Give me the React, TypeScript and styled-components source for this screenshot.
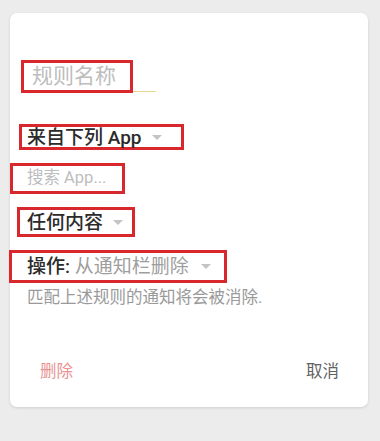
import React from 'react';
import styled, { createGlobalStyle } from 'styled-components';

const GlobalStyle = createGlobalStyle`
  html, body {
    margin: 0;
    padding: 0;
    background: #ececec;
  }
  body {
    font-family: Roboto, 'Noto Sans CJK SC', sans-serif;
  }
`;

const Page = styled.div`
  padding: 13px 12px 34px 10px;
  min-height: 441px;
  box-sizing: border-box;
`;

const Card = styled.div`
  width: 358px;
  height: 394px;
  box-sizing: border-box;
  background: #ffffff;
  border-radius: 7px;
  box-shadow: 0 1px 3px rgba(0, 0, 0, 0.12);
  padding: 47px 29px 25px 17px;
  display: flex;
  flex-direction: column;
`;

// red annotation box drawn round a field; $shift moves the whole box (and its text) right
const Marked = styled.div<{ $w: number; $h: number; $pad: number; $top?: number; $shift?: number }>`
  width: ${(p) => p.$w}px;
  height: ${(p) => p.$h}px;
  margin-left: ${(p) => -(p.$pad + 3) + (p.$shift || 0)}px;
  margin-top: ${(p) => p.$top || 0}px;
  padding-left: ${(p) => p.$pad}px;
  box-sizing: border-box;
  border: 3px solid #d8282d;
  display: flex;
  align-items: center;
  flex-shrink: 0;
`;

const NameRow = styled.div`
  display: flex;
  align-items: flex-end;
`;

const Underline = styled.span`
  width: 23px;
  height: 1px;
  margin-bottom: 1px;
  background: #e6d58c;
`;

const Placeholder = styled.span<{ $size: number }>`
  font-size: ${(p) => p.$size}px;
  color: #bdbdbd;
  line-height: 1;
  white-space: nowrap;
`;

const Label = styled.span<{ $size: number }>`
  font-size: ${(p) => p.$size}px;
  font-weight: 500;
  color: #2b2b2b;
  line-height: 1;
  white-space: nowrap;
`;

const Muted = styled.span`
  font-weight: 400;
  color: #9e9e9e;
`;

const Caret = styled.span<{ $gap: number }>`
  margin-left: ${(p) => p.$gap}px;
  width: 0;
  height: 0;
  border-left: 5px solid transparent;
  border-right: 5px solid transparent;
  border-top: 5px solid #c4c4c4;
`;

const Hint = styled.p`
  margin: 5px 0 0;
  font-size: 16.5px;
  line-height: 20px;
  color: #9a9a9a;
  white-space: nowrap;
`;

const Actions = styled.div`
  margin-top: auto;
  display: flex;
  justify-content: space-between;
  align-items: center;
  padding-left: 13px;
`;

const TextButton = styled.button<{ $danger?: boolean }>`
  border: none;
  background: none;
  padding: 0;
  font-family: inherit;
  font-size: 16.5px;
  line-height: 20px;
  color: ${(p) => (p.$danger ? '#e99494' : '#626262')};
  cursor: pointer;
`;

const App = () => {
  return (
    <>
      <GlobalStyle />
      <Page>
        <Card>
          <NameRow>
            <Marked $w={112} $h={33} $pad={8} $shift={5}>
              <Placeholder $size={21}>规则名称</Placeholder>
            </Marked>
            <Underline />
          </NameRow>

          <Marked $w={165} $h={26} $pad={5} $top={31}>
            <Label $size={19}>来自下列 App</Label>
            <Caret $gap={10} />
          </Marked>

          <Marked $w={115} $h={31} $pad={14} $top={13}>
            <Placeholder $size={16.5}>搜索 App...</Placeholder>
          </Marked>

          <Marked $w={118} $h={30} $pad={7} $top={13}>
            <Label $size={19}>任何内容</Label>
            <Caret $gap={10} />
          </Marked>

          <Marked $w={218} $h={33} $pad={15} $top={13}>
            <Label $size={19}>
              操作: <Muted>从通知栏删除</Muted>
            </Label>
            <Caret $gap={12} />
          </Marked>

          <Hint>匹配上述规则的通知将会被消除.</Hint>

          <Actions>
            <TextButton $danger>删除</TextButton>
            <TextButton>取消</TextButton>
          </Actions>
        </Card>
      </Page>
    </>
  );
};

export default App;
